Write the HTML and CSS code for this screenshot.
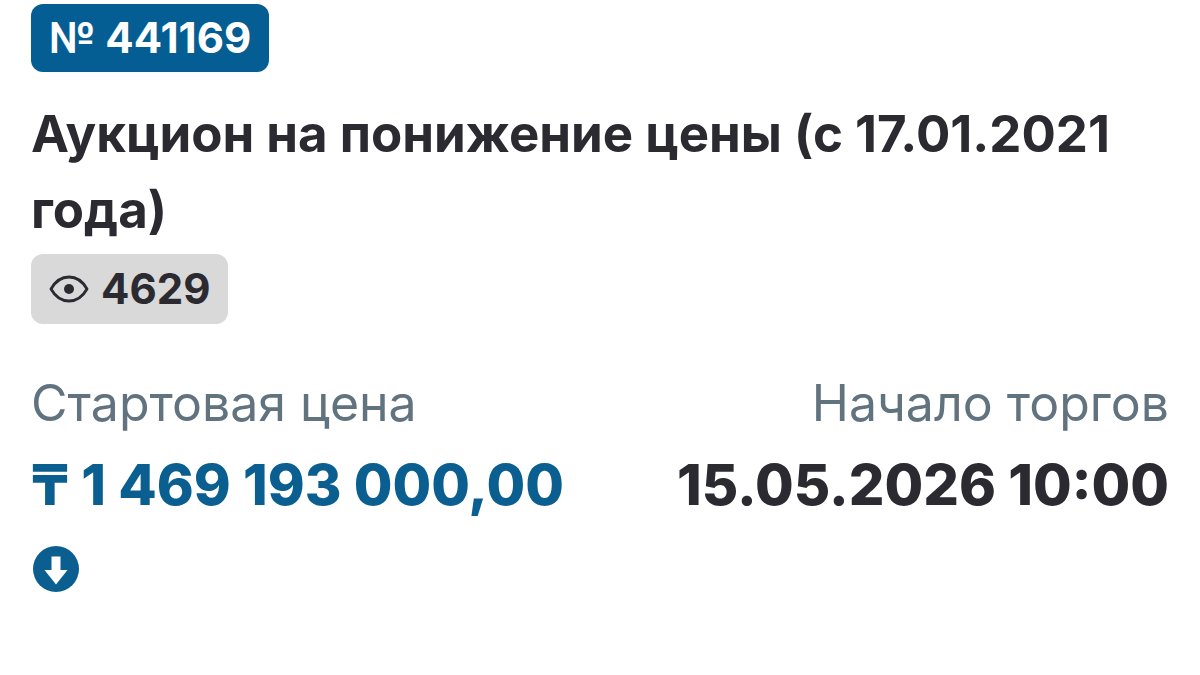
FILE: index.html
```html
<!DOCTYPE html>
<html lang="ru">
<head>
<meta charset="utf-8">
<meta name="viewport" content="width=device-width, initial-scale=1">
<title>Аукцион № 441169</title>
<link rel="stylesheet" href="styles.css">
</head>
<body>
<main class="lot">
  <span class="badge badge-number">№ 441169</span>
  <h1 class="title">Аукцион на понижение цены (с 17.01.2021 года)</h1>
  <span class="badge badge-views">
    <svg class="eye" viewBox="0 0 40 28" aria-hidden="true"><path d="M2 14C6.500 6 12.500 2 20 2s13.500 4 18 12c-4.500 8-10.500 12-18 12S6.500 22 2 14Z" fill="none" stroke="currentColor" stroke-width="2.800" stroke-linejoin="round"/><circle cx="20" cy="14" r="5" fill="currentColor"/></svg>
    4629
  </span>
  <dl class="facts">
    <div class="fact">
      <dt class="label">Стартовая цена</dt>
      <dd class="value value-price">₸ 1 469 193 000,00
        <svg class="down" viewBox="0 0 46 46" aria-hidden="true"><circle cx="23" cy="23" r="23" fill="currentColor"/><path d="M18.500 10.500h9V24h7L23 38.500 11.500 24h7Z" fill="#fff"/></svg>
      </dd>
    </div>
    <div class="fact fact-end">
      <dt class="label">Начало торгов</dt>
      <dd class="value">15.05.2026 10:00</dd>
    </div>
  </dl>
</main>
</body>
</html>
```
FILE: styles.css
```css
* { box-sizing: border-box; }
body {
  margin: 0;
  background: #fff;
  color: #2b2a31;
  font-family: Inter, "Noto Sans", sans-serif;
}
.lot {
  display: flex;
  flex-direction: column;
  align-items: flex-start;
  padding: 4px 31px;
}
.badge {
  display: flex;
  align-items: center;
  border-radius: 12px;
  padding: 0 18px;
  font-size: 42px;
  font-weight: 700;
  line-height: 68px;
}
.badge-number { background: #045e93; color: #fff; }
.badge-views { gap: 12px; background: #d9d9d9; line-height: 70px; }
.eye { width: 40px; height: 28px; }
.title {
  margin: 24px 0 6px;
  font-size: 51px;
  font-weight: 700;
  line-height: 76px;
}
.facts {
  display: flex;
  justify-content: space-between;
  width: 100%;
  margin: 38px 0 0;
}
.fact-end { text-align: right; }
.label {
  color: #627380;
  font-size: 50px;
  line-height: 82px;
}
.value {
  margin: 0;
  font-size: 56px;
  font-weight: 800;
  line-height: 82px;
}
.value-price { color: #0a5f90; }
.down { display: block; width: 46px; height: 46px; margin: 20px 0 0 2px; }
```
